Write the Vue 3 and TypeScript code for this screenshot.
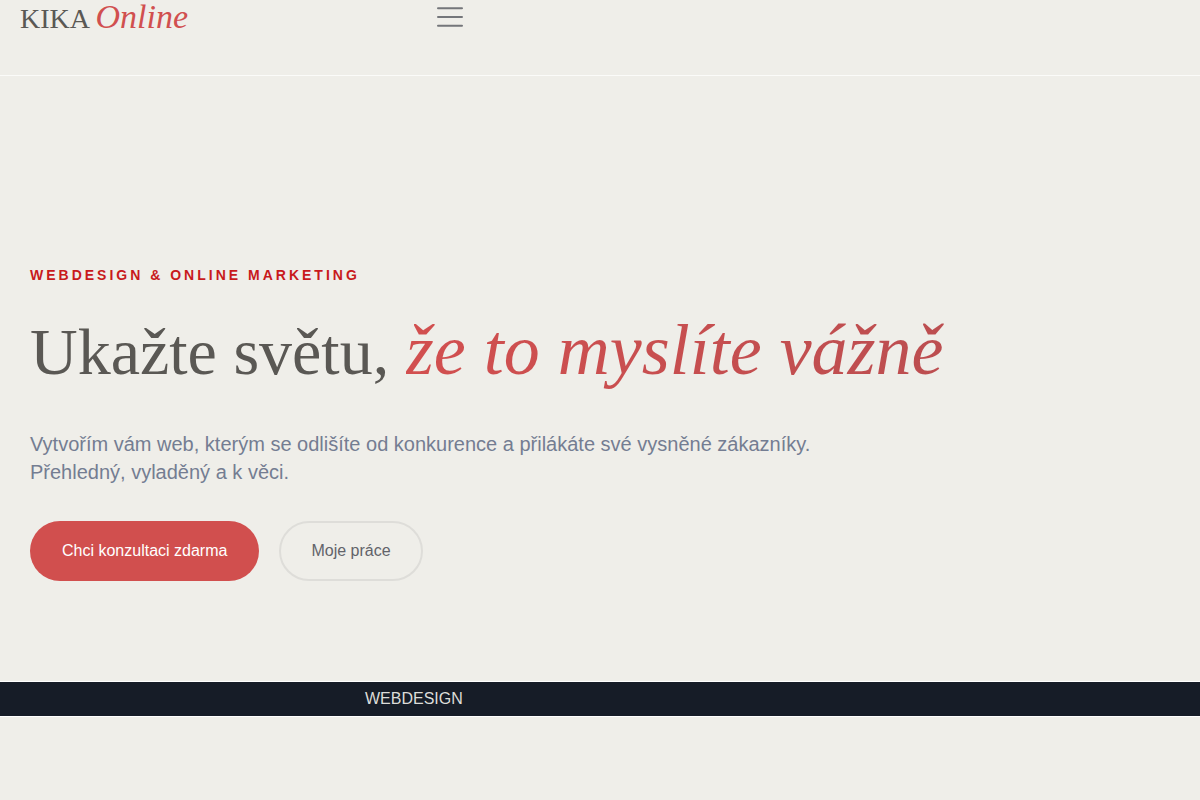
<script setup lang="ts">
const services: string[] = ['WEBDESIGN']
</script>

<template>
  <div class="page">
    <header class="header">
      <div class="header-inner">
        <a class="logo" href="#">KIKA <em>Online</em></a>
        <button class="menu" type="button" aria-label="Menu">
          <svg width="26" height="22" viewBox="0 0 26 22" fill="none" stroke="#74767a" stroke-width="2" stroke-linecap="round">
            <path d="M1 2.2H25M1 11H25M1 19.7H25" />
          </svg>
        </button>
      </div>
    </header>

    <main class="hero">
      <p class="eyebrow">WEBDESIGN &amp; ONLINE MARKETING</p>
      <h1 class="title">Ukažte světu, <em>že to myslíte vážně</em></h1>
      <p class="lead">
        Vytvořím vám web, kterým se odlišíte od konkurence a přilákáte své vysněné zákazníky.
        Přehledný, vyladěný a k věci.
      </p>
      <div class="actions">
        <a class="btn primary" href="#konzultace">Chci konzultaci zdarma</a>
        <a class="btn outline" href="#prace">Moje práce</a>
      </div>
    </main>

    <div class="ticker">
      <span v-for="service in services" :key="service">{{ service }}</span>
    </div>
  </div>
</template>

<style>
body {
  margin: 0;
  background: #efeee9;
}
</style>

<style scoped>
.page {
  min-height: 100vh;
  background: #efeee9;
  font-family: "Liberation Sans", Arial, sans-serif;
  font-size: 16px;
  color: #5a5854;
}
.header {
  border-bottom: 1px solid #fbfbf9;
}
.header-inner {
  display: flex;
  align-items: flex-start;
  justify-content: space-between;
  box-sizing: border-box;
  max-width: 483px;
  height: 75px;
  padding: 0 20px;
}
.logo {
  font-family: "Liberation Serif", "Times New Roman", serif;
  font-size: 28px;
  line-height: 34px;
  color: #5a5854;
  text-decoration: none;
  white-space: nowrap;
}
.logo em {
  font-size: 34px;
  color: #d14f4f;
}
.menu {
  display: flex;
  margin: 6px 0 0;
  padding: 0;
  border: 0;
  background: none;
  cursor: pointer;
}
.hero {
  padding: 190px 30px 100px;
}
.eyebrow {
  margin: 0;
  font-size: 14px;
  font-weight: 700;
  line-height: 18px;
  letter-spacing: 3px;
  color: #c81a1c;
}
.title {
  margin: 16px 0 28px;
  font-family: "Liberation Serif", "Times New Roman", serif;
  font-size: 66px;
  font-weight: 400;
  line-height: 100px;
}
.title em {
  font-size: 72px;
  color: transparent;
  background: linear-gradient(90deg, #d24f4f, #bc4e50);
  background-clip: text;
  -webkit-background-clip: text;
}
.lead {
  max-width: 800px;
  margin: 0;
  font-size: 20px;
  line-height: 28px;
  color: #747d92;
}
.actions {
  display: flex;
  flex-wrap: wrap;
  gap: 20px;
  margin-top: 35px;
}
.btn {
  padding: 20px 32px;
  border-radius: 30px;
  line-height: 20px;
  text-decoration: none;
}
.primary {
  background: #d14f4e;
  color: #fff;
}
.outline {
  padding: 18px 30px;
  border: 2px solid #deddd9;
  color: #62636a;
}
.ticker {
  padding-left: 365px;
  border-top: 1px solid #fff;
  border-bottom: 1px solid #fff;
  background: #161c27;
  color: #dddcd9;
  line-height: 34px;
}
</style>
